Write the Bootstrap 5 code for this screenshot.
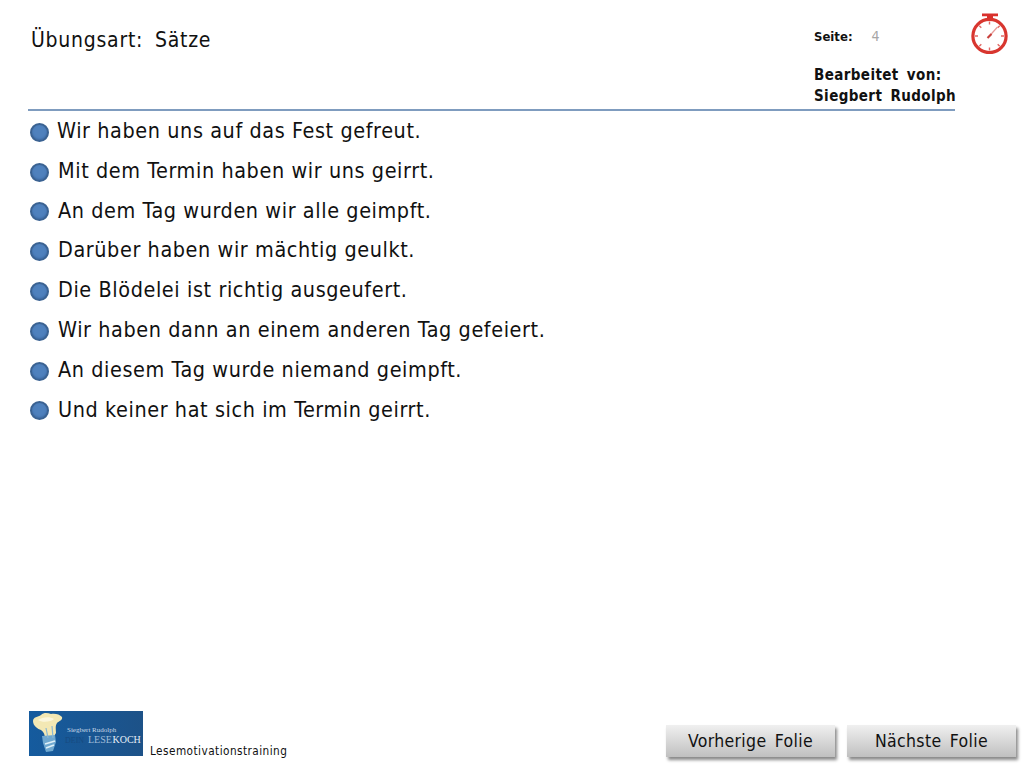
<!DOCTYPE html>
<html lang="de">
<head>
<meta charset="utf-8">
<title>Übungsart: Sätze</title>
<link href="https://cdn.jsdelivr.net/npm/bootstrap@5.3.0/dist/css/bootstrap.min.css" rel="stylesheet">
<style>
html,body{height:768px;overflow:hidden;background:#fff}
body{font-family:"DejaVu Sans Condensed","Noto Sans",sans-serif;color:#111}
.slide-page{height:768px;padding-left:28px}
.head-col{width:927px;height:111px;border-bottom:2px solid #7f9cbf}
.ex-title{font-size:21px;line-height:28px;padding:26px 0 0 3px;word-spacing:5px;letter-spacing:.75px}
.meta-col{width:141px;padding-top:26px}
.seite{font-size:13px;font-weight:600;line-height:20px;height:39px}
.seite-num{font-weight:400;color:#a6a6a6;font-size:14px;margin-left:19px}
.author{font-size:15px;font-weight:600;line-height:21px;letter-spacing:.4px;word-spacing:3px;white-space:nowrap}
.timer-ico{width:40px;height:42px;margin:12px 0 0 15px}
.sent-list{list-style:none;margin:0;padding:1px 0 0 2px}
.sent-item{height:39.8px;display:flex;align-items:center;font-size:21.4px;letter-spacing:.6px;white-space:nowrap}
.sent-item>span:last-child{padding-bottom:1.5px}
.sent-first>span:last-child{margin-left:-1px}
.dot-mark{width:19px;height:19px;flex:none;border-radius:50%;background:#4f81bd;border:2px solid #3a6292;margin-right:9px;box-shadow:inset 0 -1px 2px #3d6aa3;position:relative;top:.5px}
.foot-row{height:57px;padding-right:8px}
.logo-box{width:114px;height:45px;flex:none;margin:0 7px 12px 1px;display:block}
.foot-label{font-size:11.7px;line-height:16px;margin-bottom:9px;letter-spacing:.46px}
.slide-btn{width:169px;height:32px;border:0;border-radius:0;padding:1px 0 0;font-size:17.5px;line-height:31px;color:#111;word-spacing:3px;letter-spacing:.35px;background:linear-gradient(#f0f0f0,#c0c0c0);box-shadow:2px 3px 3px #8a8a8a;margin-bottom:11px}
.slide-btn:hover{color:#111;background:linear-gradient(#f0f0f0,#c0c0c0)}
</style>
</head>
<body>
<div class="slide-page d-flex flex-column">
  <div class="d-flex align-items-start">
    <header class="head-col d-flex justify-content-between">
      <div class="ex-title">Übungsart: Sätze</div>
      <div class="meta-col">
        <div class="seite">Seite:<span class="seite-num">4</span></div>
        <div class="author">Bearbeitet von:<br>Siegbert Rudolph</div>
      </div>
    </header>
    <svg class="timer-ico" viewBox="0 0 40 42" aria-label="Stoppuhr" role="img">
      <path d="M12 1.5h16v2.8h-5v3h-6v-3h-5z" fill="#d9302c"/>
      <circle cx="19.5" cy="24" r="16.6" fill="#fff" stroke="#d8362f" stroke-width="3.2"/>
      <g stroke="#e06a66" stroke-width="1.4">
        <path d="M19.5 9.5v3M19.5 35.5v3M5 24h3M31 24h3M9.3 13.8l2 2M27.7 32.2l2 2M9.3 34.2l2-2M27.7 15.8l2-2"/>
      </g>
      <path d="M19 24.5l8.5-9.5" stroke="#e79a97" stroke-width="1.2" fill="none"/>
      <path d="M17.5 26l4-4" stroke="#c9403c" stroke-width="2.2" fill="none"/>
    </svg>
  </div>
  <ul class="sent-list flex-grow-1">
    <li class="sent-item sent-first"><span class="dot-mark"></span><span>Wir haben uns auf das Fest gefreut.</span></li>
    <li class="sent-item"><span class="dot-mark"></span><span>Mit dem Termin haben wir uns geirrt.</span></li>
    <li class="sent-item"><span class="dot-mark"></span><span>An dem Tag wurden wir alle geimpft.</span></li>
    <li class="sent-item"><span class="dot-mark"></span><span>Darüber haben wir mächtig geulkt.</span></li>
    <li class="sent-item"><span class="dot-mark"></span><span>Die Blödelei ist richtig ausgeufert.</span></li>
    <li class="sent-item"><span class="dot-mark"></span><span>Wir haben dann an einem anderen Tag gefeiert.</span></li>
    <li class="sent-item"><span class="dot-mark"></span><span>An diesem Tag wurde niemand geimpft.</span></li>
    <li class="sent-item"><span class="dot-mark"></span><span>Und keiner hat sich im Termin geirrt.</span></li>
  </ul>
  <footer class="foot-row d-flex align-items-end">
    <svg class="logo-box" viewBox="0 0 114 45" aria-label="Dein Lesekoch" role="img">
      <defs><linearGradient id="lg" x1="0" x2="1" y1="0" y2="0"><stop offset="0" stop-color="#155b9e"/><stop offset="1" stop-color="#1d5288"/></linearGradient></defs>
      <rect width="114" height="45" fill="url(#lg)"/>
      <path d="M4 10c0-4 5-4 8-6 3-3 7-2 10-1 3-1 9 0 11 3 1 3-3 4-5 6-2 3-1 6-1 10l-3 5-8 1c0-4-1-7-4-9-3-1-8-4-8-9z" fill="#f3e8b4"/>
      <path d="M9 9c4-3 12-4 16-1-3 3-12 4-16 1z" fill="#fbf6dc"/>
      <path d="M13 25l13-1 1 7-3 9-7 1-3-9z" fill="#6fa8d0"/>
      <path d="M16 33l10-3M17 37l8-3" stroke="#dff0f8" stroke-width="1.6"/>
      <path d="M17 17l2 10M23 15l1 12" stroke="#8bb8d2" stroke-width="1.2" fill="none"/>
      <text x="38" y="21" font-family="Liberation Serif,serif" font-size="7" fill="#c8d8e8">Siegbert Rudolph</text>
      <text x="36" y="32" font-family="Liberation Serif,serif" font-size="8" fill="#174a80">DEIN</text>
      <text x="59" y="32" font-family="Liberation Serif,serif" font-size="10" fill="#9fbbd8">LESE</text>
      <text x="83.5" y="32" font-family="Liberation Serif,serif" font-size="10" fill="#e6eef6">KOCH</text>
    </svg>
    <span class="foot-label">Lesemotivationstraining</span>
    <div class="ms-auto d-flex gap-2">
      <button type="button" class="btn slide-btn me-1">Vorherige Folie</button>
      <button type="button" class="btn slide-btn">Nächste Folie</button>
    </div>
  </footer>
</div>
<script src="https://cdn.jsdelivr.net/npm/bootstrap@5.3.0/dist/js/bootstrap.bundle.min.js"></script>
</body>
</html>
